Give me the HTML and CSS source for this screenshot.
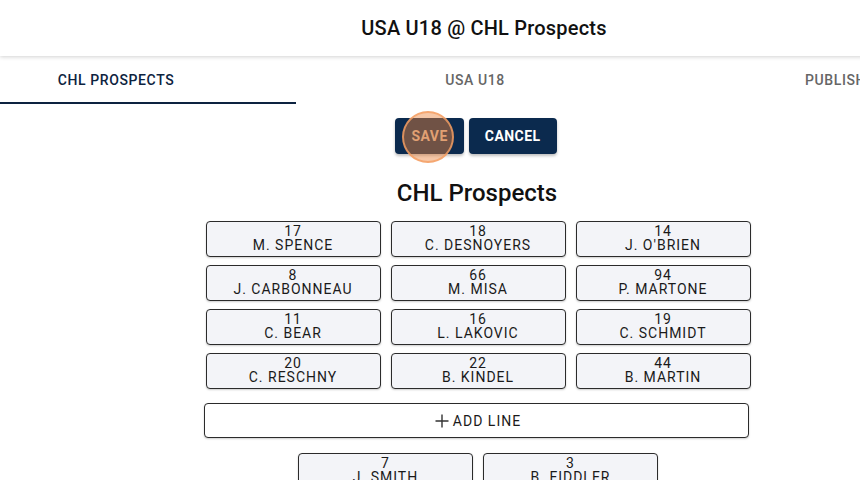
FILE: index.html
```html
<!DOCTYPE html>
<html>
<head>
<meta charset="utf-8">
<link rel="stylesheet" href="styles.css">
</head>
<body>
<div class="page">
  <header class="appbar"><h1 class="title">USA U18 @ CHL Prospects</h1></header>
  <nav class="tabs">
    <div class="tab tab-a active">CHL PROSPECTS</div>
    <div class="tab tab-b">USA U18</div>
    <div class="tab tab-c">PUBLISHED LINES</div>
    <span class="indicator"></span>
  </nav>
  <main class="content">
    <div class="actions">
      <button class="btn save">SAVE<span class="click-ring"></span></button>
      <button class="btn">CANCEL</button>
    </div>
    <h2 class="team">CHL Prospects</h2>
    <div class="grid">
      <div class="card"><span>17</span><span>M. SPENCE</span></div>
      <div class="card"><span>18</span><span>C. DESNOYERS</span></div>
      <div class="card"><span>14</span><span>J. O'BRIEN</span></div>
      <div class="card"><span>8</span><span>J. CARBONNEAU</span></div>
      <div class="card"><span>66</span><span>M. MISA</span></div>
      <div class="card"><span>94</span><span>P. MARTONE</span></div>
      <div class="card"><span>11</span><span>C. BEAR</span></div>
      <div class="card"><span>16</span><span>L. LAKOVIC</span></div>
      <div class="card"><span>19</span><span>C. SCHMIDT</span></div>
      <div class="card"><span>20</span><span>C. RESCHNY</span></div>
      <div class="card"><span>22</span><span>B. KINDEL</span></div>
      <div class="card"><span>44</span><span>B. MARTIN</span></div>
    </div>
    <button class="add-line"><svg class="plus" width="16" height="16" viewBox="0 0 16 16"><path d="M8 1.5v13M1.5 8h13" stroke="#333" stroke-width="1.4" fill="none"/></svg>ADD LINE</button>
    <div class="pair">
      <div class="card"><span>7</span><span>J. SMITH</span></div>
      <div class="card"><span>3</span><span>B. FIDDLER</span></div>
    </div>
  </main>
</div>
</body>
</html>
```
FILE: styles.css
```css
html, body {
  margin: 0;
  padding: 0;
  overflow: hidden;
  background: #fff;
}
body {
  font-family: Roboto, "Liberation Sans", sans-serif;
  color: #1a1a1a;
}
.page {
  width: 956px;
}
.appbar {
  height: 56px;
  display: flex;
  align-items: center;
  justify-content: center;
  padding-left: 12px;
  box-sizing: border-box;
  box-shadow: 0 1px 4px rgba(0,0,0,0.18);
  position: relative;
  z-index: 1;
}
.title {
  margin: 0;
  font-size: 20px;
  font-weight: 500;
  color: #111;
  letter-spacing: 0.2px;
}
.tabs {
  height: 48px;
  display: grid;
  grid-template-columns: 232px 486px 1fr;
  position: relative;
}
.tab {
  display: flex;
  align-items: center;
  justify-content: center;
  font-size: 14px;
  font-weight: 500;
  letter-spacing: 0.6px;
  color: #666;
}
.tab.active { color: #0d2340; }
.tab-c { justify-content: flex-start; padding-left: 87px; }
.indicator {
  position: absolute;
  left: 0;
  bottom: 0;
  width: 296px;
  height: 2px;
  background: #0d2340;
}
.content {
  display: flex;
  flex-direction: column;
  align-items: center;
  padding-top: 14px;
}
.actions {
  display: flex;
  gap: 5px;
  margin-left: -4px;
}
.btn {
  position: relative;
  height: 36px;
  padding: 0 16px;
  border: none;
  border-radius: 4px;
  background: #0b2a4e;
  color: #fff;
  font-family: Roboto, "Liberation Sans", sans-serif;
  font-size: 14px;
  font-weight: 700;
  letter-spacing: 0.45px;
  box-shadow: 0 2px 3px rgba(0,0,0,0.25);
}
.save { color: #d9b8a0; }
.click-ring {
  position: absolute;
  left: 7px;
  top: -7px;
  width: 52px;
  height: 52px;
  border-radius: 50%;
  background: rgba(235, 130, 60, 0.45);
  border: 2px solid rgba(245, 160, 100, 0.8);
  box-sizing: border-box;
}
.team {
  margin: 25px 0 0;
  height: 28px;
  line-height: 28px;
  font-size: 24px;
  font-weight: 500;
  color: #111;
  margin-left: -2px;
}
.grid {
  margin-top: 14px;
  display: grid;
  grid-template-columns: repeat(3, 175px);
  column-gap: 10px;
  row-gap: 8px;
}
.card {
  width: 175px;
  height: 36px;
  box-sizing: border-box;
  border: 1px solid #2b2b2b;
  border-radius: 4px;
  background: #f3f4f8;
  box-shadow: 0 1px 2px rgba(0,0,0,0.2);
  display: flex;
  flex-direction: column;
  align-items: center;
  justify-content: center;
  padding-bottom: 2px;
  font-size: 14px;
  line-height: 14px;
  font-weight: 400;
  letter-spacing: 1px;
  color: #1a1a1a;
}
.add-line {
  margin-top: 14px;
  width: 545px;
  height: 35px;
  margin-left: -4px;
  border: 1px solid #2b2b2b;
  border-radius: 4px;
  background: #fff;
  box-shadow: 0 1px 2px rgba(0,0,0,0.2);
  font-family: Roboto, "Liberation Sans", sans-serif;
  font-size: 14px;
  font-weight: 400;
  letter-spacing: 1px;
  color: #1a1a1a;
  display: flex;
  align-items: center;
  justify-content: center;
}
.plus {
  margin-right: 3px;
  margin-left: 3px;
}
.pair {
  margin-top: 15px;
  display: flex;
  gap: 10px;
}
```
